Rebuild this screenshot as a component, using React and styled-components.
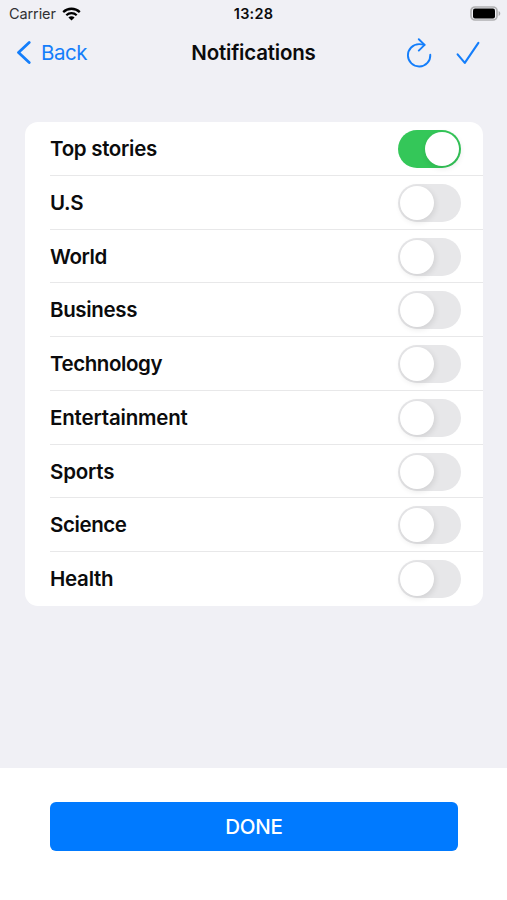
import { useState } from "react";
import styled, { createGlobalStyle } from "styled-components";

const GlobalStyle = createGlobalStyle`
  body {
    margin: 0;
    font-family: Inter, "Liberation Sans", sans-serif;
    color: #0b0b0c;
    background-color: #fff;
  }
`;
const Screen = styled.div`
  width: 507px;
  height: 900px;
  display: flex;
  flex-direction: column;
  background-color: #f0f0f5;
  overflow: hidden;
`;
const StatusBar = styled.div`
  height: 27px;
  display: grid;
  grid-template-columns: 1fr auto 1fr;
  align-items: center;
  padding: 0px 9px;
  box-sizing: border-box;
  font-size: 14.5px;
  line-height: 20px;
`;
const Carrier = styled.div`
  display: flex;
  align-items: center;
  gap: 6px;
  color: #303033;
  letter-spacing: -0.1px;
`;
const Time = styled.div`
  font-weight: 600;
  letter-spacing: 0.2px;
`;
const Battery = styled.svg`
  justify-self: end;
  margin-right: -3px;
`;
const NavBar = styled.header`
  height: 51px;
  display: grid;
  grid-template-columns: 1fr auto 1fr;
  align-items: center;
  padding: 0px 16px;
  box-sizing: border-box;
`;
const PlainButton = styled.button`
  display: flex;
  align-items: center;
  border: none;
  padding: 0;
  background: transparent;
  color: #147efb;
  font-family: inherit;
  cursor: pointer;
`;
const BackButton = styled(PlainButton)`
  gap: 9px;
  font-size: 20.5px;
  line-height: 26px;
  letter-spacing: -0.5px;
`;
const Title = styled.h1`
  margin: 0;
  font-size: 20.5px;
  font-weight: 600;
  line-height: 26px;
  letter-spacing: -0.2px;
`;
const Actions = styled.div`
  display: flex;
  justify-content: flex-end;
  align-items: center;
  gap: 24px;
  padding-right: 11px;
`;
const Content = styled.main`
  flex: 1;
  padding: 44px 24px 0px 25px;
`;
const Card = styled.ul`
  margin: 0;
  padding: 0;
  list-style: none;
  border-radius: 13px;
  background-color: #fff;
  overflow: hidden;
`;
const Row = styled.li`
  height: 53.75px;
  margin-left: 25px;
  padding: 1.5px 22px 0px 0px;
  box-sizing: border-box;
  display: flex;
  align-items: center;
  justify-content: space-between;
  border-bottom: 1px solid #e8e8e9;
  &:last-child {
    border-bottom-color: transparent;
  }
`;
const Label = styled.span`
  font-size: 20.5px;
  font-weight: 600;
  line-height: 26px;
  letter-spacing: ${(props) => props.$tracking}px;
`;
const Track = styled.button`
  width: 63px;
  height: 38px;
  border: none;
  border-radius: 19px;
  padding: 2px;
  display: flex;
  justify-content: ${(props) => (props.$on ? "flex-end" : "flex-start")};
  background-color: ${(props) => (props.$on ? "#34c759" : "#e7e7e9")};
  cursor: pointer;
`;
const Thumb = styled.span`
  width: 34px;
  height: 34px;
  border-radius: 50%;
  background-color: #fff;
  box-shadow: 1px 2px 6px rgba(0, 0, 0, 0.11);
`;
const Footer = styled.footer`
  height: 132px;
  padding: 34px 49px 0px 50px;
  box-sizing: border-box;
  background-color: #fff;
`;
const DoneButton = styled.button`
  width: 100%;
  height: 49px;
  border: none;
  border-radius: 6px;
  padding: 0;
  background-color: #007aff;
  color: #fff;
  font-family: inherit;
  font-size: 20.5px;
  font-weight: 500;
  line-height: 26px;
  letter-spacing: -0.25px;
  cursor: pointer;
`;

const TOPICS = [
  { name: "Top stories", tracking: -0.3 },
  { name: "U.S", tracking: -0.3 },
  { name: "World", tracking: -0.4 },
  { name: "Business", tracking: -0.35 },
  { name: "Technology", tracking: -0.42 },
  { name: "Entertainment", tracking: -0.18 },
  { name: "Sports", tracking: -0.2 },
  { name: "Science", tracking: -0.4 },
  { name: "Health", tracking: -0.25 },
];

const WifiIcon = () => (
  <svg width="19" height="14" viewBox="0 0 19 14" fill="none">
    <path d="M1.2 5.1a12 12 0 0 1 16.6 0" stroke="#000" strokeWidth="2.3" />
    <path d="M4.3 8.3a7.5 7.5 0 0 1 10.4 0" stroke="#000" strokeWidth="2.2" />
    <path d="M9.5 13.6 6.4 10.5a4.4 4.4 0 0 1 6.2 0z" fill="#000" />
  </svg>
);

const BatteryIcon = () => (
  <Battery width="31" height="15" viewBox="0 0 31 15" fill="none">
    <rect x="1" y="1" width="26" height="13" rx="4" fill="#f0f0f5" stroke="#b0b0b2" strokeWidth="1.7" />
    <rect x="3" y="2.5" width="22" height="10" rx="2" fill="#000" />
    <path d="M28.6 5v5c2.2-1 2.2-4 0-5z" fill="#a9a9ab" />
  </Battery>
);

const BackIcon = () => (
  <svg width="16" height="24" viewBox="0 0 16 24" fill="none" stroke="#147efb" strokeWidth="2.8" strokeLinecap="round" strokeLinejoin="round">
    <path d="M13.2 1.5 2.5 11.5l10.7 10" />
  </svg>
);

const RefreshIcon = () => (
  <svg width="26" height="30" viewBox="0 0 26 30" fill="none" stroke="#147efb" strokeWidth="1.9" strokeLinecap="round" strokeLinejoin="round">
    <path d="M24.3 16.7A11.2 11.2 0 1 1 13.1 6.1Q16 6.1 18.4 6.9" />
    <path d="M12.8 1.2 18.6 6.9 12.8 12.6" />
  </svg>
);

const CheckIcon = () => (
  <svg width="24" height="24" viewBox="0 0 24 24" fill="none" stroke="#147efb" strokeWidth="2.1" strokeLinecap="round" strokeLinejoin="round">
    <path d="M1.6 13.3 8.8 21.9 22.4 1.8" />
  </svg>
);

const Switch = ({ on, label, onToggle }) => (
  <Track $on={on} type="button" role="switch" aria-checked={on} aria-label={label} onClick={onToggle}>
    <Thumb />
  </Track>
);

const App = () => {
  const [enabled, setEnabled] = useState({ "Top stories": true });

  const toggle = (name) =>
    setEnabled((current) => ({ ...current, [name]: !current[name] }));

  return (
    <Screen>
      <GlobalStyle />
      <StatusBar>
        <Carrier>
          Carrier
          <WifiIcon />
        </Carrier>
        <Time>13:28</Time>
        <BatteryIcon />
      </StatusBar>
      <NavBar>
        <BackButton type="button">
          <BackIcon />
          Back
        </BackButton>
        <Title>Notifications</Title>
        <Actions>
          <PlainButton type="button" aria-label="Refresh">
            <RefreshIcon />
          </PlainButton>
          <PlainButton type="button" aria-label="Confirm">
            <CheckIcon />
          </PlainButton>
        </Actions>
      </NavBar>
      <Content>
        <Card>
          {TOPICS.map(({ name, tracking }) => (
            <Row key={name}>
              <Label $tracking={tracking}>{name}</Label>
              <Switch on={!!enabled[name]} label={name} onToggle={() => toggle(name)} />
            </Row>
          ))}
        </Card>
      </Content>
      <Footer>
        <DoneButton type="button">DONE</DoneButton>
      </Footer>
    </Screen>
  );
};

export default App;
